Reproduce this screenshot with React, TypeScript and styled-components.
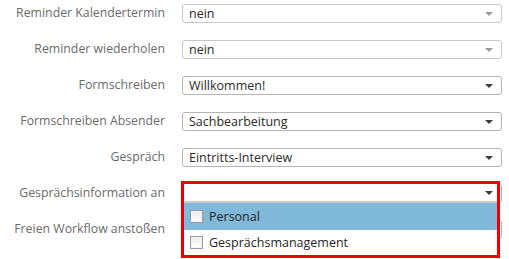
import React from "react";
import styled, { createGlobalStyle } from "styled-components";

const Global = createGlobalStyle`
  html, body { margin: 0; padding: 0; background: #fff; }
  body { font-family: "Open Sans", "DejaVu Sans", sans-serif; font-size: 12.5px; min-height: 259px; }
`;

const Form = styled.div`
  display: grid;
  grid-template-columns: 182px 320px;
  row-gap: 17px;
  padding: 4px 0 30px;
`;

const Label = styled.div`
  text-align: right;
  padding-right: 17px;
  color: #6b6b6b;
  font-size: 12.3px;
  line-height: 18px;
  white-space: nowrap;
`;

const Field = styled.div`
  position: relative;
  height: 19px;
`;

const Select = styled.div<{ $muted?: boolean }>`
  box-sizing: border-box;
  height: 19px;
  border: 1px solid ${(p) => (p.$muted ? "#c8c8c8" : "#b4b4b4")};
  border-radius: 3px;
  background: #fff;
  display: flex;
  align-items: center;
  padding: 0 8px 0 6px;
  color: #2a2a2a;
  font-size: 12.5px;
`;

const Value = styled.span`
  flex: 1;
  line-height: 17px;
`;

const Arrow = styled.span<{ $muted?: boolean }>`
  width: 0;
  height: 0;
  border-left: 4px solid transparent;
  border-right: 4px solid transparent;
  border-top: 4px solid ${(p) => (p.$muted ? "#9a9a9a" : "#3c3c3c")};
`;

const Popup = styled.div`
  position: absolute;
  left: -1px;
  top: -3px;
  width: 319px;
  height: 77px;
  box-sizing: border-box;
  border: 3px solid #f00000;
  background: #fff;
  z-index: 5;
  display: flex;
  flex-direction: column;
`;

const PopupHead = styled.div`
  height: 17px;
  flex: none;
  display: flex;
  align-items: center;
  justify-content: flex-end;
  padding-right: 4px;
  border-bottom: 2px solid #c9c9c9;
`;

const Option = styled.div<{ $active?: boolean }>`
  height: ${(p) => (p.$active ? 27 : 25)}px;
  flex: none;
  background: ${(p) => (p.$active ? "#80b9d9" : "#fff")};
  display: flex;
  align-items: center;
  gap: 6px;
  padding-left: 6px;
  color: #262626;
  font-size: 12.5px;
`;

const Box = styled.span`
  box-sizing: border-box;
  width: 13px;
  height: 13px;
  border: 1px solid #9b9b9b;
  background: linear-gradient(#ececec, #ffffff);
  box-shadow: inset 0 0 0 1px #f4f4f4;
`;

const rows: { label: string; value: string; muted?: boolean }[] = [
  { label: "Reminder Kalendertermin", value: "nein", muted: true },
  { label: "Reminder wiederholen", value: "nein", muted: true },
  { label: "Formschreiben", value: "Willkommen!" },
  { label: "Formschreiben Absender", value: "Sachbearbeitung" },
  { label: "Gespräch", value: "Eintritts-Interview" },
];

export default function App() {
  return (
    <>
      <Global />
      <Form>
        {rows.map((r) => (
          <React.Fragment key={r.label}>
            <Label>{r.label}</Label>
            <Field>
              <Select $muted={r.muted}>
                <Value>{r.value}</Value>
                <Arrow $muted={r.muted} />
              </Select>
            </Field>
          </React.Fragment>
        ))}
        <Label>Gesprächsinformation an</Label>
        <Field>
          <Select>
            <Value />
            <Arrow />
          </Select>
          <Popup>
            <PopupHead>
              <Arrow />
            </PopupHead>
            <Option $active>
              <Box />
              Personal
            </Option>
            <Option>
              <Box />
              Gesprächsmanagement
            </Option>
          </Popup>
        </Field>
        <Label>Freien Workflow anstoßen</Label>
        <Field>
          <Select>
            <Value />
            <Arrow />
          </Select>
        </Field>
      </Form>
    </>
  );
}
